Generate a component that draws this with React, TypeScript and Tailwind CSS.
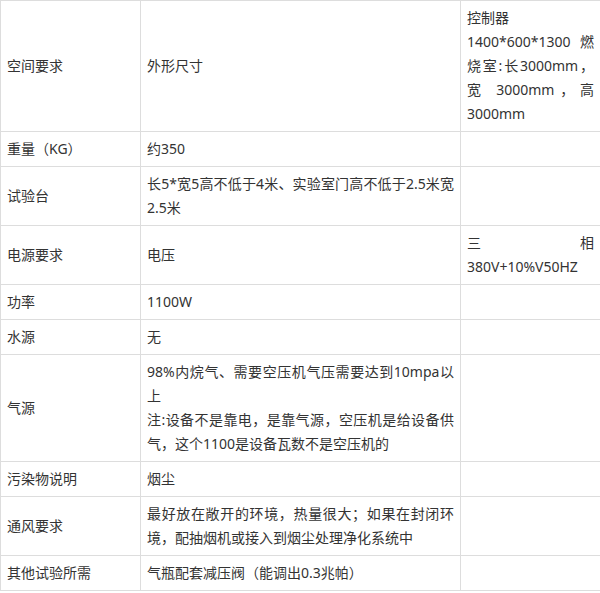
import React from "react";

const rows: { a: React.ReactNode; b: React.ReactNode; c: React.ReactNode }[] = [
  {
    a: "空间要求",
    b: "外形尺寸",
    c: (
      <>
        控制器
        <br />
        1400*600*1300 燃烧室:长3000mm，宽 3000mm，高3000mm
      </>
    ),
  },
  { a: "重量（KG）", b: "约350", c: "" },
  { a: "试验台", b: "长5*宽5高不低于4米、实验室门高不低于2.5米宽2.5米", c: "" },
  { a: "电源要求", b: "电压", c: "三相380V+10%V50HZ" },
  { a: "功率", b: "1100W", c: "" },
  { a: "水源", b: "无", c: "" },
  {
    a: "气源",
    b: (
      <>
        98%内烷气、需要空压机气压需要达到10mpa以上
        <br />
        注:设备不是靠电，是靠气源，空压机是给设备供气，这个1100是设备瓦数不是空压机的
      </>
    ),
    c: "",
  },
  { a: "污染物说明", b: "烟尘", c: "" },
  { a: "通风要求", b: "最好放在敞开的环境，热量很大；如果在封闭环境，配抽烟机或接入到烟尘处理净化系统中", c: "" },
  { a: "其他试验所需", b: "气瓶配套减压阀（能调出0.3兆帕）", c: "" },
];

const td = "border border-[#dddddd] px-[6px] py-[5px] align-middle text-justify";

export default function App() {
  return (
    <div className="bg-white w-[600px] h-[593px]">
      <table
        className="w-[600px] border-collapse table-fixed text-[14px] leading-[24px] text-[#333333]"
        style={{ fontFamily: '"Noto Sans", "Noto Sans CJK SC", sans-serif' }}
      >
        <colgroup>
          <col className="w-[140px]" />
          <col className="w-[320px]" />
          <col className="w-[140px]" />
        </colgroup>
        <tbody>
          {rows.map((r, i) => (
            <tr key={i}>
              <td className={td}>{r.a}</td>
              <td className={td}>{r.b}</td>
              <td className={td}>{r.c}</td>
            </tr>
          ))}
        </tbody>
      </table>
    </div>
  );
}
